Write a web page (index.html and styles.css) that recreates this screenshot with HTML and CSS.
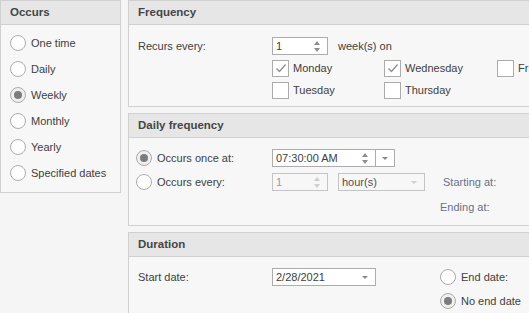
FILE: index.html
```html
<!DOCTYPE html>
<html>
<head>
<meta charset="utf-8">
<link rel="stylesheet" href="styles.css">
</head>
<body>
<div class="root">
  <section class="panel occurs">
    <div class="phead">Occurs</div>
    <div class="occurs-body">
      <label class="radio"><span class="rb"></span>One time</label>
      <label class="radio"><span class="rb"></span>Daily</label>
      <label class="radio"><span class="rb on"></span>Weekly</label>
      <label class="radio"><span class="rb"></span>Monthly</label>
      <label class="radio"><span class="rb"></span>Yearly</label>
      <label class="radio"><span class="rb"></span>Specified dates</label>
    </div>
  </section>

  <div class="col">
    <section class="panel freq">
      <div class="phead">Frequency</div>
      <div class="freq-body">
        <div class="row">
          <span class="lbl">Recurs every:</span>
          <span class="box spin w56"><span class="val">1</span><span class="arrows"><i class="up"></i><i class="dn"></i></span></span>
          <span class="after">week(s) on</span>
        </div>
        <div class="days">
          <label class="chk"><span class="cb"><svg viewBox="0 0 16 16" width="16" height="16"><polyline points="3.5,8.5 6.5,11.5 12.5,4.5" fill="none" stroke="#8c8c8c" stroke-width="1.2"/></svg></span>Monday</label>
          <label class="chk"><span class="cb"><svg viewBox="0 0 16 16" width="16" height="16"><polyline points="3.5,8.5 6.5,11.5 12.5,4.5" fill="none" stroke="#8c8c8c" stroke-width="1.2"/></svg></span>Wednesday</label>
          <label class="chk"><span class="cb"></span>Friday</label>
          <label class="chk"><span class="cb"></span>Tuesday</label>
          <label class="chk"><span class="cb"></span>Thursday</label>
        </div>
      </div>
    </section>

    <section class="panel daily">
      <div class="phead">Daily frequency</div>
      <div class="daily-body">
        <div class="row">
          <label class="radio lbl2"><span class="rb on"></span>Occurs once at:</label>
          <span class="box spin w104"><span class="val">07:30:00 AM</span><span class="arrows"><i class="up"></i><i class="dn"></i></span></span>
          <span class="box btn"><i class="dd"></i></span>
        </div>
        <div class="row r2">
          <label class="radio lbl2"><span class="rb"></span>Occurs every:</label>
          <span class="box spin w56 dis"><span class="val">1</span><span class="arrows"><i class="up"></i><i class="dn"></i></span></span>
          <span class="box combo w87 dis"><span class="val">hour(s)</span><i class="dd"></i></span>
          <span class="side">Starting at:</span>
        </div>
        <div class="row r3">
          <span class="side push">Ending at:</span>
        </div>
      </div>
    </section>

    <section class="panel dur">
      <div class="phead">Duration</div>
      <div class="dur-body">
        <div class="row">
          <span class="lbl">Start date:</span>
          <span class="box combo w104"><span class="val">2/28/2021</span><i class="dd"></i></span>
          <label class="radio endr"><span class="rb"></span>End date:</label>
        </div>
        <div class="row r4">
          <label class="radio endr push2"><span class="rb on"></span>No end date</label>
        </div>
      </div>
    </section>
  </div>
</div>
</body>
</html>
```
FILE: styles.css
```css
html, body {
  margin: 0;
  padding: 0;
  background: #f5f5f5;
  overflow: hidden;
  width: 529px;
  height: 313px;
}
body {
  font-family: "Liberation Sans", Arial, sans-serif;
  font-size: 11px;
  color: #404040;
}
.root {
  display: flex;
  gap: 7px;
  align-items: flex-start;
}
.panel {
  border: 1px solid #d0d0d0;
  background: #f7f7f7;
  box-sizing: border-box;
}
.phead {
  height: 23px;
  line-height: 23px;
  background: #e6e6e6;
  border-bottom: 1px solid #d0d0d0;
  font-weight: bold;
  color: #454545;
  padding-left: 9px;
  font-size: 11.5px;
}
.occurs {
  flex: none;
  width: 121px;
  height: 193px;
}
.occurs-body {
  padding: 5px 0 0 9px;
}
.radio {
  display: flex;
  align-items: center;
  height: 26px;
  white-space: nowrap;
}
.rb {
  width: 14px;
  height: 14px;
  border: 1px solid #ababab;
  border-radius: 50%;
  background: #fff;
  margin-right: 5px;
  flex: none;
  position: relative;
}
.rb.on {
  background: #efefef;
}
.rb.on::after {
  content: "";
  position: absolute;
  left: 3px;
  top: 3px;
  width: 8px;
  height: 8px;
  border-radius: 50%;
  background: #7c7c7c;
}
.col {
  flex: none;
  width: 420px;
  display: flex;
  flex-direction: column;
  gap: 6px;
}
.freq { height: 107px; }
.daily { height: 113px; }
.dur { height: 100px; }

.freq-body { padding: 12px 0 0 9px; }
.daily-body { padding: 11px 0 0 7px; }
.dur-body { padding: 11px 0 0 9px; }

.row {
  display: flex;
  align-items: center;
  height: 18px;
}
.lbl { width: 134px; flex: none; }
.lbl2 { width: 136px; flex: none; height: 18px; }
.after { margin-left: 10px; }

.box {
  box-sizing: border-box;
  height: 18px;
  border: 1px solid #acacac;
  background: #fff;
  display: flex;
  align-items: center;
  position: relative;
  flex: none;
}
.val { padding-left: 3px; flex: 1; white-space: nowrap; }
.w56 { width: 56px; }
.w104 { width: 104px; }
.w87 { width: 87px; }
.arrows {
  width: 14px;
  display: flex;
  flex-direction: column;
  align-items: center;
  gap: 3px;
  margin-right: 3px;
}
.arrows i {
  width: 0;
  height: 0;
  border-left: 3.5px solid transparent;
  border-right: 3.5px solid transparent;
}
.arrows .up { border-bottom: 4px solid #8e8e8e; }
.arrows .dn { border-top: 4px solid #8e8e8e; }
.dd {
  width: 0;
  height: 0;
  border-left: 3.5px solid transparent;
  border-right: 3.5px solid transparent;
  border-top: 3px solid #8a8a8a;
  margin-right: 6px;
}
.btn {
  width: 20px;
  margin-left: -1px;
  justify-content: center;
}
.btn .dd { margin: 0; }
.combo .dd { margin-right: 7px; }
.dis { border-color: #c4c4c4; background: #f7f7f7; }
.dis .val { color: #9a9a9a; }
.combo.dis .val { color: #505050; }
.dis .arrows .up { border-bottom-color: #cfcfcf; }
.dis .arrows .dn { border-top-color: #cfcfcf; }
.dis .dd { border-top-color: #cfcfcf; }
.combo.w87 { margin-left: 10px; }
.side { margin-left: 18px; color: #67718a; }
.r2 { margin-top: 6px; }
.r3 { margin-top: 7px; }
.push { margin-left: 304px; }

.days {
  display: grid;
  grid-template-columns: 112px 113px 100px;
  grid-auto-rows: 22px;
  margin: 2px 0 0 134px;
}
.chk {
  display: flex;
  align-items: center;
  white-space: nowrap;
}
.cb {
  box-sizing: border-box;
  width: 17px;
  height: 17px;
  border: 1px solid #ababab;
  background: #fff;
  margin-right: 4px;
  flex: none;
  display: flex;
}
.cb svg { margin: -0.5px; }

.endr { margin-left: 64px; height: 18px; }
.r4 { margin-top: 6px; }
.push2 { margin-left: 302px; }
```
